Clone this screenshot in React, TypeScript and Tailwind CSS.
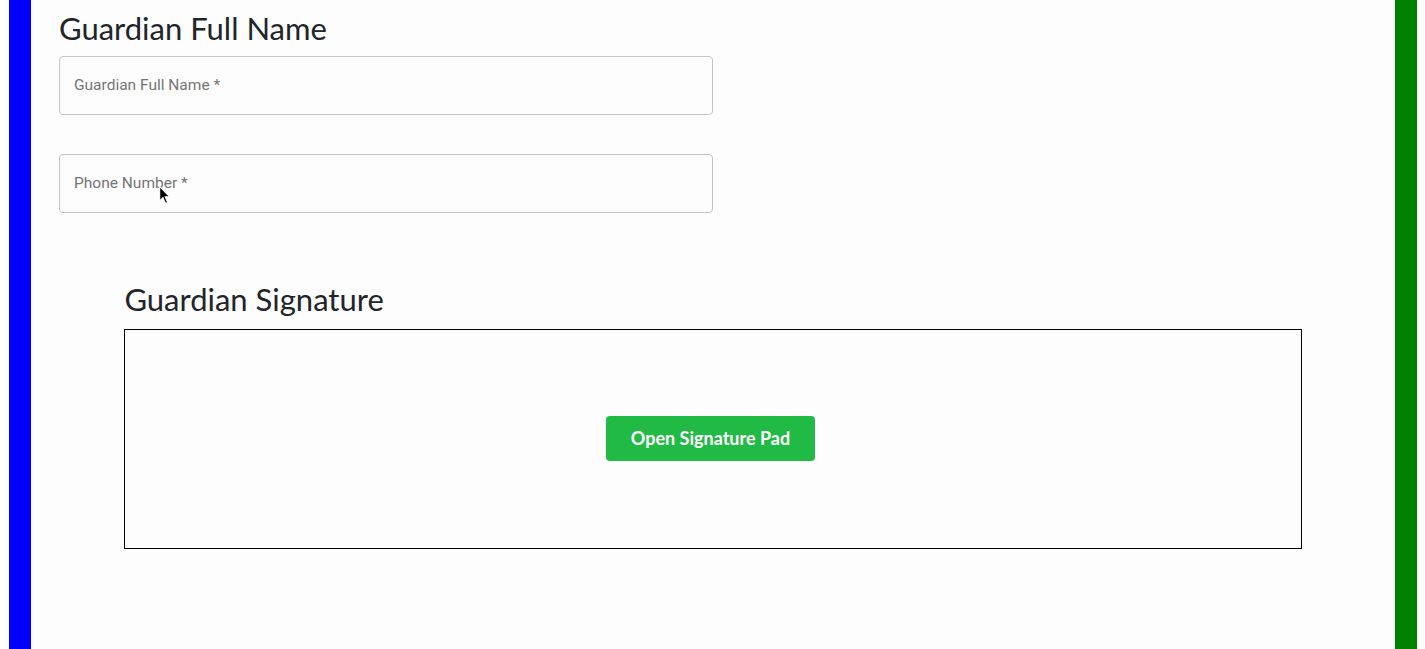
// guardian form section - name, phone, signature pad

const lato = { fontFamily: 'Lato, "Open Sans", sans-serif' };
const roboto = { fontFamily: 'Roboto, "Liberation Sans", sans-serif' };

function Field({ label }: { label: string }) {
  return (
    <input
      type="text"
      placeholder={label}
      style={roboto}
      className="block w-1/2 h-[59px] rounded-[4px] border border-[#c4c4c4] bg-transparent px-[14px] pb-[2px] text-[15.5px] text-[#212121] outline-none placeholder:text-[#757575]"
    />
  );
}

function Cursor() {
  return (
    <svg
      className="absolute left-[159px] top-[186px] pointer-events-none"
      width="13"
      height="19"
      viewBox="0 0 12 18"
    >
      <path d="M0.5 0.5 L0.5 14 L3.6 11 L6 16.6 L8 15.7 L5.7 10.3 L10 10.3 Z" fill="#000" stroke="#fff" strokeWidth="1" />
    </svg>
  );
}

export default function App() {
  return (
    <div className="relative flex w-full min-h-[649px] bg-[#fdfdfd]">
      <div className="w-[9px] shrink-0 bg-white" />
      <div className="w-[22px] shrink-0 bg-[#0000ff]" />

      <main className="flex-1 px-[28px] pt-[10px]">
        <h3 style={lato} className="text-[31px] leading-[37.2px] font-normal text-[#212529] mb-[9px]">
          Guardian Full Name
        </h3>
        <Field label="Guardian Full Name *" />
        <div className="mt-[39px]">
          <Field label="Phone Number *" />
        </div>

        <section className="w-[90%] mx-auto mt-[68px]">
          <h3 style={lato} className="text-[31px] leading-[37.2px] font-normal text-[#212529] mb-[11px]">
            Guardian Signature
          </h3>
          <div className="h-[220px] border border-black flex items-center justify-center">
            <button
              style={lato}
              className="mr-[5px] mb-[2px] h-[45px] w-[209px] rounded-[4px] bg-[#21ba45] text-white text-[18px] font-bold"
            >
              Open Signature Pad
            </button>
          </div>
        </section>
      </main>

      <div className="w-[22px] shrink-0 bg-[#008000]" />
      <div className="w-[8px] shrink-0 bg-white" />

      <Cursor />
    </div>
  );
}
